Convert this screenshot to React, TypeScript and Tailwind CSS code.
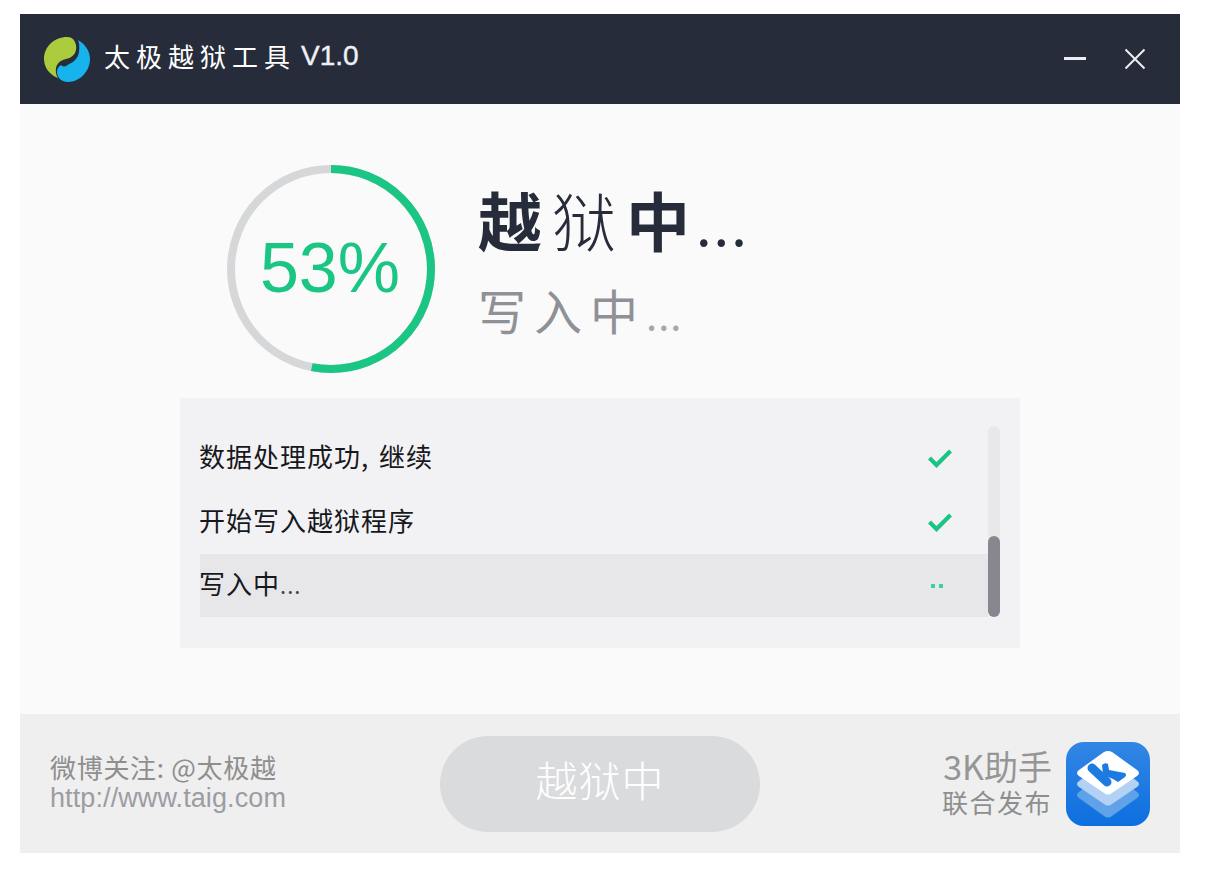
import React from "react";

const cjk = "font-['Noto_Sans_CJK_SC','Liberation_Sans',sans-serif]";
const latin = "font-['Liberation_Sans','Noto_Sans_CJK_SC',sans-serif]";

const TaigLogo = () => (
  <svg width="46" height="46" viewBox="0 0 46 46" className="shrink-0">
    <path
      d="M23 1C31 1 33 9 32 14C31 19 27 22 22 23C17 24 13 27 12 32C11.5 36 12 39 14 42C6 39 0 32 0 23C0 11 10 1 23 1Z"
      fill="#a9cb3c"
    />
    <path
      d="M34 4C41 8 46 15 46 23C46 35 36 46 24 46C18 46 13.5 42 13 37C12.7 33.5 14 31 17 29C18.5 31 22 31 25 28C30 26 34 22 35 16C35.5 11 35.5 7 34 4Z"
      fill="#16b3ec"
    />
  </svg>
);

const KLogo = () => (
  <svg width="84" height="84" viewBox="0 0 84 84" className="shrink-0">
    <defs>
      <linearGradient id="kbg" x1="0" y1="0" x2="0" y2="1">
        <stop offset="0" stopColor="#3286e4" />
        <stop offset="1" stopColor="#0d6fdf" />
      </linearGradient>
    </defs>
    <rect width="84" height="84" rx="18" fill="url(#kbg)" />
    <path d="M38 32Q42 30 46 32L71 50Q75 53 71 56L46 74Q42 77 38 74L13 56Q9 53 13 50Z" fill="#5fa2ea" />
    <path d="M38 21Q42 19 46 21L71 39Q75 42 71 45L46 62Q42 65 38 62L13 45Q9 42 13 39Z" fill="#b3d1f4" />
    <path d="M38 10Q42 8 46 10L71 28Q75 31 71 34L46 51Q42 54 38 51L13 34Q9 31 13 28Z" fill="#ffffff" />
    <path d="M26 26L41 40" stroke="#1d7ae2" strokeWidth="9" strokeLinecap="round" fill="none" />
    <path d="M36 23Q39 20 42 22L43 28L59 31Q61 33 59 35L52 40L47 37L37 33Z" fill="#1d7ae2" />
  </svg>
);

const Check = () => (
  <svg width="26" height="22" viewBox="0 0 26 22" className="mb-[1px]">
    <path d="M2.5 11L9.5 18L23.5 4" stroke="#19c584" strokeWidth="4.2" fill="none" />
  </svg>
);

const Progress = ({ percent }: { percent: number }) => {
  const r = 100;
  const c = 2 * Math.PI * r;
  return (
    <div className="relative w-[208px] h-[208px] shrink-0">
      <svg width="208" height="208" viewBox="0 0 208 208">
        <circle cx="104" cy="104" r={r} fill="none" stroke="#d6d7d9" strokeWidth="8" />
        <circle
          cx="104"
          cy="104"
          r={r}
          fill="none"
          stroke="#1bc583"
          strokeWidth="8"
          strokeDasharray={`${(c * percent) / 100} ${c}`}
          transform="rotate(-90 104 104)"
        />
      </svg>
      <div className={`absolute inset-0 pb-[3px] pr-[2px] flex items-center justify-center text-[70px] leading-none text-[#1bc583] ${latin}`}>
        {percent}%
      </div>
    </div>
  );
};

const rows = [
  { text: "数据处理成功, 继续", done: true },
  { text: "开始写入越狱程序", done: true },
  { text: "写入中", dots: "...", done: false },
];

export default function App() {
  return (
    <div className="w-[1206px] h-[870px] bg-white pt-[14px] pl-[20px] overflow-hidden">
      <div className="w-[1160px] h-[839px] flex flex-col bg-[#fafafa]">
        {/* title bar */}
        <div className="h-[90px] shrink-0 bg-[#272c3b] flex items-center pl-[24px] pr-[34px] pb-[1px]">
          <TaigLogo />
          <span className={`ml-[14px] mb-[6px] text-[26px] tracking-[6px] leading-none text-white ${cjk}`}>太极越狱工具</span>
          <span className={`ml-[5px] mb-[5px] text-[28px] leading-none text-[#eef1f5] [-webkit-text-stroke:0.4px_#eef1f5] ${latin}`}>V1.0</span>
          <div className="ml-auto flex items-center gap-[38px]">
            <div className="w-[22px] h-[3px] bg-[#eceef2]" />
            <svg width="22" height="22" viewBox="0 0 22 22">
              <path d="M1.5 1.5L20.5 20.5M20.5 1.5L1.5 20.5" stroke="#eceef2" strokeWidth="2" />
            </svg>
          </div>
        </div>

        {/* status */}
        <div className="flex-1 flex flex-col">
          <div className="flex items-start pl-[207px] pt-[61px]">
            <Progress percent={53} />
            <div className="ml-[43px] flex flex-col">
              <div className={`mt-[11px] text-[64px] leading-[84px] tracking-[10px] text-[#272c3b] whitespace-nowrap ${cjk}`}>
                <span className="font-bold">越</span>
                <span className="font-light">狱</span>
                <span className="font-bold tracking-[6px]">中</span>
                <span className="text-[56px] tracking-[2px]">...</span>
              </div>
              <div className={`mt-[12px] text-[48px] leading-[66px] tracking-[8px] text-[#8f9196] whitespace-nowrap ${cjk}`}>
                写入中<span className="text-[40px] tracking-[1px] text-[#a5a7ab]">...</span>
              </div>
            </div>
          </div>

          {/* log panel */}
          <div className="mt-[25px] ml-[160px] w-[840px] h-[250px] bg-[#f2f2f4] pt-[28px] px-[20px] flex">
            <div className="w-[788px] flex flex-col">
              {rows.map((row) => (
                <div
                  key={row.text}
                  className={`h-[64px] last:h-[63px] flex items-center justify-between pr-[35px] ${row.done ? "" : "bg-[#e7e7ea]"}`}
                >
                  <span className={`-ml-[1px] mb-[5px] text-[26px] leading-none text-[#17181c] tracking-[1px] [word-spacing:3px] whitespace-nowrap ${cjk}`}>
                    {row.text}
                    {row.dots && <span className="text-[22px] tracking-0 text-[#44454c]">{row.dots}</span>}
                  </span>
                  {row.done ? (
                    <Check />
                  ) : (
                    <span className="flex gap-[4px] pr-[10px]">
                      <span className="w-[4px] h-[4px] bg-[#3ed19b]" />
                      <span className="w-[4px] h-[4px] bg-[#3ed19b]" />
                    </span>
                  )}
                </div>
              ))}
            </div>
            <div className="w-[12px] h-[191px] rounded-[6px] bg-[#e8e8eb] flex flex-col justify-end">
              <div className="h-[81px] rounded-[6px] bg-[#87888f]" />
            </div>
          </div>
        </div>

        {/* footer */}
        <div className="h-[139px] shrink-0 bg-[#efefef] flex items-center pl-[30px] pr-[30px]">
          <div className="flex flex-col w-[390px] pb-[3px]">
            <span className={`text-[26px] leading-[32px] tracking-[0.7px] text-[#8e8e8e] whitespace-nowrap ${cjk}`}>微博关注: @太极越</span>
            <span className={`text-[27px] leading-[30px] tracking-[0.1px] text-[#9b9da3] ${latin}`}>http://www.taig.com</span>
          </div>
          <div className={`w-[320px] h-[96px] mt-[1px] pb-[10px] rounded-full bg-[#dadbdd] flex items-center justify-center text-[42px] font-light leading-none tracking-[1px] text-white ${cjk}`}>
            越狱中
          </div>
          <div className="ml-auto flex items-center gap-[14px]">
            <div className="flex flex-col items-end pb-[6px]">
              <span className={`text-[34px] leading-[42px] text-[#969696] ${cjk}`}>3K助手</span>
              <span className={`text-[26px] leading-[30px] tracking-[1.5px] text-[#8e8e8e] ${cjk}`}>联合发布</span>
            </div>
            <KLogo />
          </div>
        </div>
      </div>
    </div>
  );
}
